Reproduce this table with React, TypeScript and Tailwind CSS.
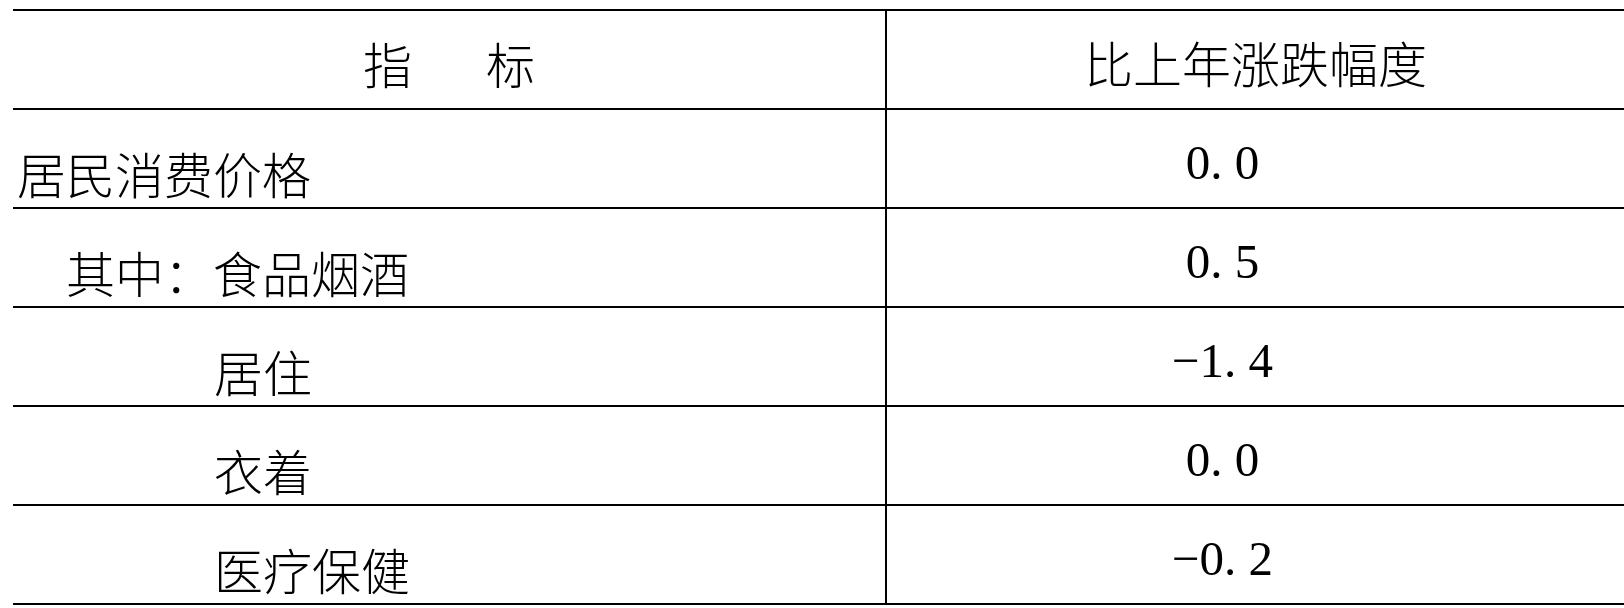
import React from "react";

const cjk = "font-['Noto_Sans_CJK_SC','Noto_Sans',sans-serif]";
const num = "font-['Liberation_Serif','Times_New_Roman',serif]";

function Num({ v }: { v: string }) {
  const parts = v.split(".");
  return (
    <span className={`${num} text-[49px] leading-none text-black`}>
      {parts[0].replace("-", "\u2212")}
      <span className="inline-block w-[0.5em]">.</span>
      {parts[1]}
    </span>
  );
}

const rows: { label: string; indent: string; value: string }[] = [
  { label: "居民消费价格", indent: "pl-[4px]", value: "0.0" },
  { label: "其中：食品烟酒", indent: "pl-[53px]", value: "0.5" },
  { label: "居住", indent: "pl-[201px]", value: "-1.4" },
  { label: "衣着", indent: "pl-[201px]", value: "0.0" },
  { label: "医疗保健", indent: "pl-[201px]", value: "-0.2" },
];

export default function App() {
  return (
    <div className="w-[1624px] h-[608px] bg-white overflow-hidden">
      <div className="mt-[9px] ml-[13px] border-t-2 border-black">
        <div className="grid grid-cols-[874px_1fr] h-[99px] border-b-2 border-black">
          <div className={`border-r-2 border-black flex items-center justify-center gap-[74px] pt-[6px] ${cjk} text-[49px] leading-none font-light text-black`}>
            <span>指</span>
            <span>标</span>
          </div>
          <div className={`flex items-center justify-center pt-[4px] ${cjk} text-[49px] leading-none font-light text-black`}>
            比上年涨跌幅度
          </div>
        </div>
        {rows.map((r, i) => (
          <div key={i} className="grid grid-cols-[874px_1fr] h-[99px] border-b-2 border-black">
            <div className={`border-r-2 border-black flex items-center ${r.indent} pt-[28px] ${cjk} text-[49px] leading-none font-light text-black`}>
              {r.label}
            </div>
            <div className="flex items-center justify-center pr-[66px] pt-[8px]">
              <Num v={r.value} />
            </div>
          </div>
        ))}
      </div>
    </div>
  );
}
